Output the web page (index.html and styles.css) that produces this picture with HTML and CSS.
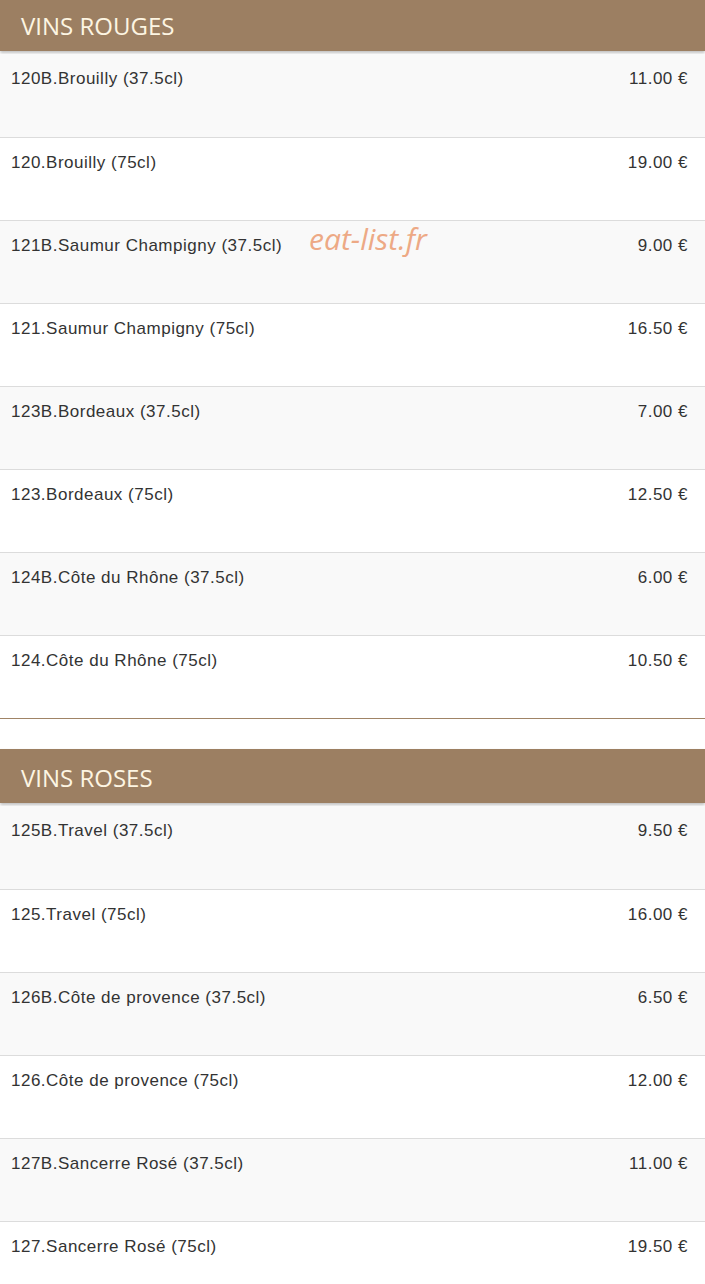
FILE: index.html
```html
<!DOCTYPE html>
<html lang="fr">
<head>
    <meta charset="UTF-8">
    <meta name="viewport" content="width=device-width, initial-scale=1.0">
    <title>Vins</title>
    <link rel="stylesheet" href="styles.css">
</head>
<body>

    <div class="menu">
        <div class="section first">
            <h2 class="section-title">VINS ROUGES</h2>
            <div class="item"><span>120B.Brouilly (37.5cl)</span><span>11.00 €</span></div>
            <div class="item"><span>120.Brouilly (75cl)</span><span>19.00 €</span></div>
            <div class="item"><span>121B.Saumur Champigny (37.5cl)</span><span>9.00 €</span></div>
            <div class="item"><span>121.Saumur Champigny (75cl)</span><span>16.50 €</span></div>
            <div class="item"><span>123B.Bordeaux (37.5cl)</span><span>7.00 €</span></div>
            <div class="item"><span>123.Bordeaux (75cl)</span><span>12.50 €</span></div>
            <div class="item"><span>124B.Côte du Rhône (37.5cl)</span><span>6.00 €</span></div>
            <div class="item"><span>124.Côte du Rhône (75cl)</span><span>10.50 €</span></div>
            <div class="watermark">eat-list.fr</div>
        </div>

        <div class="section">
            <h2 class="section-title">VINS ROSES</h2>
            <div class="item"><span>125B.Travel (37.5cl)</span><span>9.50 €</span></div>
            <div class="item"><span>125.Travel (75cl)</span><span>16.00 €</span></div>
            <div class="item"><span>126B.Côte de provence (37.5cl)</span><span>6.50 €</span></div>
            <div class="item"><span>126.Côte de provence (75cl)</span><span>12.00 €</span></div>
            <div class="item"><span>127B.Sancerre Rosé (37.5cl)</span><span>11.00 €</span></div>
            <div class="item"><span>127.Sancerre Rosé (75cl)</span><span>19.50 €</span></div>
        </div>
    </div>

</body>
</html>
```

FILE: styles.css
```css
body {
    margin: 0;
    background-color: #fff;
    font-family: "Liberation Sans", Arial, sans-serif;
    color: #333;
}

.section {
    position: relative;
    border-bottom: 1px solid #a08466;
    margin-bottom: 30px;
}

.section.first {
    margin-top: -3px;
}

.section-title {
    margin: 0 0 3px 0;
    height: 54px;
    padding-left: 21px;
    box-sizing: border-box;
    background-color: #9c7f62;
    box-shadow: 0 2px 3px rgba(0, 0, 0, 0.25);
    color: #fdf5e2;
    font-family: "Open Sans", sans-serif;
    font-weight: normal;
    font-size: 24px;
    line-height: 58px;
}

.item {
    display: flex;
    justify-content: space-between;
    height: 83px;
    box-sizing: border-box;
    padding: 15px 17px 0 11px;
    border-top: 1px solid #dcdcdc;
    font-size: 17px;
    letter-spacing: 0.5px;
    line-height: 20px;
}

.section-title + .item {
    border-top: none;
}

.item:nth-of-type(odd) {
    background-color: #f9f9f9;
}

.watermark {
    position: absolute;
    left: 309px;
    top: 222px;
    color: #eda985;
    font-family: "Open Sans", sans-serif;
    font-style: italic;
    font-size: 30px;
    line-height: 40px;
}
```
